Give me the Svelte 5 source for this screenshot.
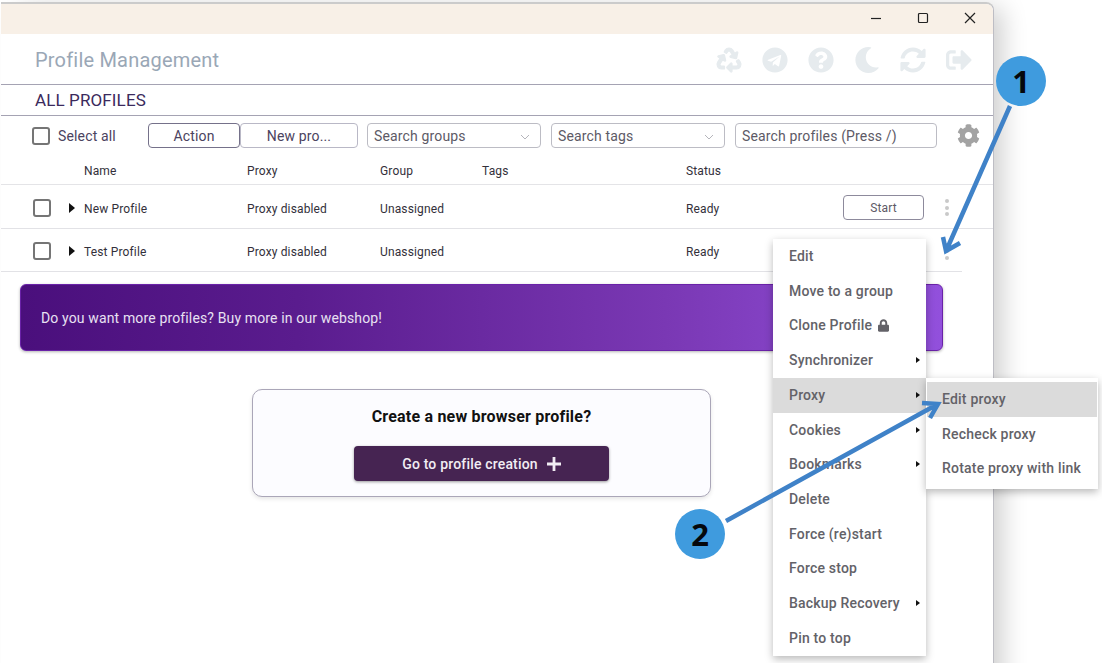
<script>
  const headerIcons = [
    { box: '0 0 512 512', heavy: true, d: 'M184.561 261.903c3.232 13.997-12.123 24.635-24.068 17.168l-40.736-25.455-50.867 81.402C55.606 356.273 70.96 384 96.012 384H148c6.627 0 12 5.373 12 12v40c0 6.627-5.373 12-12 12H96.115c-75.334 0-121.302-83.048-81.408-146.88l50.822-81.388-40.725-25.448c-12.081-7.547-8.966-25.961 4.879-29.158l110.237-25.45c8.611-1.988 17.201 3.381 19.189 11.99l25.452 110.237zm98.561-182.915l41.289 66.076-40.74 25.457c-12.051 7.528-9 25.953 4.879 29.158l110.237 25.45c8.672 1.999 17.215-3.438 19.189-11.99l25.45-110.237c3.197-13.844-11.99-24.719-24.068-17.168l-40.687 25.424-41.263-66.082c-37.521-60.033-125.209-60.171-162.816 0l-17.963 28.766c-3.51 5.62-1.8 13.021 3.82 16.533l33.919 21.195c5.62 3.512 13.024 1.803 16.536-3.817l17.961-28.743c12.712-20.341 41.973-19.676 54.257-.022zM497.288 301.12l-27.515-44.065c-3.511-5.623-10.916-7.334-16.538-3.821l-33.861 21.159c-5.62 3.512-7.33 10.915-3.818 16.536l27.564 44.112c13.257 21.211-2.057 48.96-27.136 48.96H320V336.02c0-14.213-17.242-21.383-27.313-11.313l-80 79.981c-6.249 6.248-6.249 16.379 0 22.627l80 79.989C302.689 517.308 320 510.3 320 495.989V448h95.88c75.274 0 121.335-82.997 81.408-146.88z' },
    { box: '0 0 496 512', d: 'M248 8C111 8 0 119 0 256s111 248 248 248 248-111 248-248S385 8 248 8zm121.8 169.9l-40.7 191.8c-3 13.6-11.1 16.9-22.4 10.5l-62-45.7-29.9 28.8c-3.3 3.3-6.1 6.1-12.5 6.1l4.4-63.1 114.9-103.8c5-4.4-1.1-6.9-7.7-2.5l-142 89.4-61.2-19.1c-13.3-4.2-13.6-13.3 2.8-19.7l239.1-92.2c11.1-4 20.8 2.7 17.2 19.5z' },
    { box: '0 0 512 512', d: 'M504 256c0 136.997-111.043 248-248 248S8 392.997 8 256C8 119.083 119.043 8 256 8s248 111.083 248 248zM262.655 90c-54.497 0-89.255 22.957-116.549 63.758-3.536 5.286-2.353 12.415 2.715 16.258l34.699 26.31c5.205 3.947 12.621 3.008 16.665-2.122 17.864-22.658 30.113-35.797 57.303-35.797 20.429 0 45.698 13.148 45.698 32.958 0 14.976-12.363 22.667-32.534 33.976C247.128 238.528 216 254.941 216 296v4c0 6.627 5.373 12 12 12h56c6.627 0 12-5.373 12-12v-1.333c0-28.462 83.186-29.647 83.186-106.667 0-58.002-60.165-102-116.531-102zM256 338c-25.365 0-46 20.635-46 46 0 25.364 20.635 46 46 46s46-20.636 46-46c0-25.365-20.635-46-46-46z' },
    { box: '0 0 512 512', d: 'M283.211 512c78.962 0 151.079-35.925 198.857-94.792 7.068-8.708-.639-21.43-11.562-19.35-124.203 23.654-238.262-71.576-238.262-196.954 0-72.222 38.662-138.635 101.498-174.394 9.686-5.512 7.25-20.197-3.756-22.23A258.156 258.156 0 0 0 283.211 0c-141.309 0-256 114.511-256 256 0 141.309 114.511 256 256 256z' },
    { box: '0 0 512 512', d: 'M370.72 133.28C339.458 104.008 298.888 87.962 255.848 88c-77.458.068-144.328 53.178-162.791 126.85-1.344 5.363-6.122 9.15-11.651 9.15H24.103c-7.498 0-13.194-6.807-11.807-14.176C33.933 94.924 134.813 8 256 8c66.448 0 126.791 26.136 171.315 68.685L463.03 40.97C478.149 25.851 504 36.559 504 57.941V192c0 13.255-10.745 24-24 24H345.941c-21.382 0-32.09-25.851-16.971-40.971l41.75-41.749zM32 296h134.059c21.382 0 32.09 25.851 16.971 40.971l-41.75 41.75c31.262 29.273 71.835 45.319 114.876 45.28 77.418-.07 144.315-53.144 162.787-126.849 1.344-5.363 6.122-9.15 11.651-9.15h57.304c7.498 0 13.194 6.807 11.807 14.176C478.067 417.076 377.187 504 256 504c-66.448 0-126.791-26.136-171.315-68.685L48.97 471.03C33.851 486.149 8 475.441 8 454.059V320c0-13.255 10.745-24 24-24z' },
    { box: '0 0 512 512', d: 'M497 273L329 441c-15 15-41 4.5-41-17v-96H152c-13.3 0-24-10.7-24-24v-96c0-13.3 10.7-24 24-24h136V88c0-21.4 25.9-32 41-17l168 168c9.3 9.4 9.3 24.6 0 34zM192 436v-40c0-6.6-5.4-12-12-12H96c-17.7 0-32-14.3-32-32V160c0-17.7 14.3-32 32-32h84c6.6 0 12-5.4 12-12V76c0-6.6-5.4-12-12-12H96c-53 0-96 43-96 96v192c0 53 43 96 96 96h84c6.6 0 12-5.4 12-12z' }
  ];
  const cog = 'M487.4 315.7l-42.6-24.6c4.3-23.2 4.3-47 0-70.2l42.6-24.6c4.9-2.8 7.1-8.6 5.5-14-11.1-35.6-30-67.8-54.7-94.6-3.8-4.1-10-5.1-14.8-2.3L380.8 110c-17.9-15.4-38.5-27.3-60.8-35.1V25.8c0-5.6-3.9-10.5-9.4-11.7-36.7-8.2-74.3-7.8-109.2 0-5.5 1.2-9.4 6.1-9.4 11.7V75c-22.2 7.9-42.8 19.8-60.8 35.1L88.7 85.5c-4.9-2.8-11-1.9-14.8 2.3-24.7 26.7-43.6 58.9-54.7 94.6-1.7 5.4.6 11.2 5.5 14L67.3 221c-4.3 23.2-4.3 47 0 70.2l-42.6 24.6c-4.9 2.8-7.1 8.6-5.5 14 11.1 35.6 30 67.8 54.7 94.6 3.8 4.1 10 5.1 14.8 2.3l42.6-24.6c17.9 15.4 38.5 27.3 60.8 35.1v49.2c0 5.6 3.9 10.5 9.4 11.7 36.7 8.2 74.3 7.8 109.2 0 5.5-1.2 9.4-6.1 9.4-11.7v-49.2c22.2-7.9 42.8-19.8 60.8-35.1l42.6 24.6c4.9 2.8 11 1.9 14.8-2.3 24.7-26.7 43.6-58.9 54.7-94.6 1.5-5.5-.7-11.3-5.6-14.1zM256 336c-44.1 0-80-35.9-80-80s35.9-80 80-80 80 35.9 80 80-35.9 80-80 80z';
  const lock = 'M400 224h-24v-72C376 68.2 307.8 0 224 0S72 68.2 72 152v72H48c-26.5 0-48 21.5-48 48v192c0 26.5 21.5 48 48 48h352c26.5 0 48-21.5 48-48V272c0-26.5-21.5-48-48-48zm-104 0H152v-72c0-39.7 32.3-72 72-72s72 32.3 72 72v72z';

  const profiles = [
    { name: 'New Profile', cls: 'row' },
    { name: 'Test Profile', cls: 'row short' }
  ];
  const menu = [
    { label: 'Edit' },
    { label: 'Move to a group' },
    { label: 'Clone Profile', locked: true },
    { label: 'Synchronizer', sub: true },
    { label: 'Proxy', sub: true, active: true },
    { label: 'Cookies', sub: true },
    { label: 'Bookmarks', sub: true },
    { label: 'Delete' },
    { label: 'Force (re)start' },
    { label: 'Force stop' },
    { label: 'Backup Recovery', sub: true },
    { label: 'Pin to top' }
  ];
  const submenu = [
    { label: 'Edit proxy', active: true },
    { label: 'Recheck proxy' },
    { label: 'Rotate proxy with link' }
  ];
</script>

<div class="page">
  <div class="window">
    <div class="titlebar">
      <svg class="winbtn" viewBox="0 0 12 12"><path d="M1 6.500h10" /></svg>
      <svg class="winbtn" viewBox="0 0 12 12"><rect x="1.500" y="1.500" width="9" height="9" rx="1" /></svg>
      <svg class="winbtn" viewBox="0 0 12 12"><path d="M1 1l10 10M11 1L1 11" /></svg>
    </div>

    <header class="head">
      <h1>Profile Management</h1>
      <div class="head-icons">
        {#each headerIcons as icon}
          <svg viewBox={icon.box} class:heavy={icon.heavy}><path d={icon.d} /></svg>
        {/each}
      </div>
    </header>

    <div class="section">ALL PROFILES</div>

    <div class="toolbar">
      <span class="check tool-check"></span>
      <span class="select-all">Select all</span>
      <button class="btn action">Action</button>
      <button class="btn newpro">New pro...</button>
      <div class="field groups">Search groups
        <svg viewBox="0 0 10 6"><path d="M1 1l4 4 4-4" /></svg>
      </div>
      <div class="field tags">Search tags
        <svg viewBox="0 0 10 6"><path d="M1 1l4 4 4-4" /></svg>
      </div>
      <div class="field profiles">Search profiles (Press /)</div>
      <svg class="gear" viewBox="0 0 512 512"><path d={cog} /></svg>
    </div>

    <div class="thead">
      <span></span><span>Name</span><span>Proxy</span><span>Group</span><span>Tags</span><span>Status</span>
    </div>

    {#each profiles as p}
      <div class={p.cls}>
        <div class="lead"><span class="check"></span><span class="caret"></span></div>
        <span>{p.name}</span>
        <span>Proxy disabled</span>
        <span>Unassigned</span>
        <span></span>
        <span>Ready</span>
        <button class="start">Start</button>
        <div class="dots"><i></i><i></i><i></i></div>
      </div>
    {/each}

    <div class="banner">Do you want more profiles? Buy more in our webshop!</div>

    <div class="card">
      <h2>Create a new browser profile?</h2>
      <button class="create">Go to profile creation
        <svg viewBox="0 0 14 14"><path d="M7 0v14M0 7h14" /></svg>
      </button>
    </div>
  </div>

  <div class="menu">
    {#each menu as item}
      <div class="item" class:active={item.active}>
        {item.label}
        {#if item.locked}
          <svg class="lock" viewBox="0 0 448 512"><path d={lock} /></svg>
        {/if}
        {#if item.sub}<span class="subcaret"></span>{/if}
      </div>
    {/each}
  </div>

  <div class="menu sub">
    {#each submenu as item}
      <div class="item" class:active={item.active}>{item.label}</div>
    {/each}
  </div>

  <svg class="arrows" viewBox="0 0 1102 663">
    <path d="M1010 106L946.500 250M943 237L946 251L960 243" />
    <path d="M726 521L937 404.500M922 403L938 404L930 418" />
  </svg>
  <div class="badge one">1</div>
  <div class="badge two">2</div>
</div>

<style>
  :global(html), :global(body) {
    margin: 0;
    overflow: hidden;
    background: #fff;
  }
  .page {
    position: relative;
    height: 663px;
    overflow: hidden;
    padding-top: 2px;
    box-sizing: border-box;
    font-family: Roboto, "Liberation Sans", sans-serif;
    color: #3a3446;
  }
  .window {
    margin-left: 1px;
    width: 993px;
    height: 700px;
    box-sizing: border-box;
    background: #fff;
    border-top: 2px solid #cbcbcb;
    border-right: 1px solid #bdbdc4;
    border-top-right-radius: 8px;
    box-shadow: 14px 0 26px -6px rgba(0, 0, 0, .2);
  }
  .titlebar {
    height: 30px;
    box-sizing: border-box;
    padding: 0 17px 2px 0;
    background: #f8f0e7;
    border-top-right-radius: 7px;
    display: flex;
    align-items: center;
    justify-content: flex-end;
    gap: 35px;
  }
  .winbtn {
    width: 12px;
    height: 12px;
    fill: none;
    stroke: #222;
    stroke-width: 1.200;
  }
  .head {
    height: 50px;
    box-sizing: content-box;
    border-bottom: 1px solid #a5a3b3;
    display: flex;
    align-items: center;
    justify-content: space-between;
    padding: 0 21px 0 34px;
  }
  h1 {
    margin: 2px 0 0;
    font-size: 20px;
    font-weight: 400;
    color: #9aa7b6;
    letter-spacing: .2px;
  }
  .head-icons {
    display: flex;
    gap: 20px;
    padding-top: 2px;
  }
  .head-icons svg {
    width: 26px;
    height: 26px;
    fill: #e6ebee;
  }
  .head-icons svg.heavy {
    stroke: #e6ebee;
    stroke-width: 26;
    overflow: visible;
    width: 24px;
    margin: 0 1px;
  }
  .section {
    height: 30px;
    border-bottom: 1px solid #a5a3b3;
    padding-left: 34px;
    line-height: 31px;
    font-size: 17px;
    letter-spacing: .12px;
    color: #3b2a5c;
  }
  .toolbar {
    height: 39px;
    display: flex;
    align-items: flex-start;
    padding: 7px 0 0 31px;
    box-sizing: border-box;
    font-size: 14px;
    letter-spacing: .15px;
  }
  .check {
    display: block;
    width: 18px;
    height: 18px;
    box-sizing: border-box;
    border: 2px solid #757575;
    border-radius: 3px;
    flex: none;
  }
  .tool-check {
    margin: 4px 8px 0 0;
  }
  .select-all {
    width: 90px;
    line-height: 27px;
    color: #4b4360;
  }
  button {
    font-family: inherit;
    cursor: pointer;
    letter-spacing: inherit;
  }
  .btn {
    height: 25px;
    padding: 0;
    font-size: 14px;
    color: #4b4360;
    background: #fff;
    border: 1px solid #b9b8c6;
    border-radius: 4px;
  }
  .action {
    width: 92px;
    border-color: #75718a;
  }
  .newpro {
    width: 118px;
  }
  .field {
    height: 25px;
    box-sizing: border-box;
    border: 1px solid #bcbcc4;
    border-radius: 4px;
    padding: 0 6px;
    line-height: 25px;
    color: #5d5a66;
    position: relative;
    margin-left: 10px;
  }
  .field svg {
    position: absolute;
    right: 10px;
    top: 10px;
    width: 10px;
    height: 6px;
    fill: none;
    stroke: #b5b5bb;
    stroke-width: 1;
  }
  .groups {
    width: 174px;
    margin-left: 9px;
  }
  .tags {
    width: 174px;
  }
  .profiles {
    width: 202px;
  }
  .gear {
    width: 23px;
    height: 23px;
    margin: 1px 0 0 20px;
    fill: #a3a3a3;
  }
  .thead, .row {
    display: grid;
    grid-template-columns: 83px 163px 133px 102px 204px 157px 81px 1fr;
    align-items: center;
    font-size: 12px;
    letter-spacing: .14px;
    color: #33303a;
  }
  .thead {
    height: 27px;
    padding-top: 2px;
    border-bottom: 1px solid #e4e4e7;
  }
  .row {
    height: 41px;
    padding-top: 2px;
    border-bottom: 1px solid #e2e2e6;
  }
  .row > span {
    padding-top: 2px;
  }
  .row.short {
    height: 40px;
    margin-right: 31px;
  }
  .lead {
    display: flex;
    align-items: center;
    padding-left: 32px;
    gap: 18px;
  }
  .caret {
    width: 0;
    height: 0;
    border-left: 6px solid #111;
    border-top: 5px solid transparent;
    border-bottom: 5px solid transparent;
  }
  .start {
    width: 81px;
    height: 25px;
    padding: 0;
    font-size: 12px;
    color: #5d5a66;
    background: #fff;
    border: 1px solid #8d8a9c;
    border-radius: 4px;
  }
  .dots {
    display: flex;
    flex-direction: column;
    align-items: center;
    gap: 2.500px;
    width: 46px;
  }
  .dots i {
    display: block;
    width: 4px;
    height: 4px;
    border-radius: 50%;
    background: #c9c9c9;
  }
  .banner {
    margin: 12px 50px 0 19px;
    height: 67px;
    box-sizing: border-box;
    padding-left: 20px;
    line-height: 66px;
    font-size: 14px;
    letter-spacing: .14px;
    color: #e8e1f2;
    border: 1px solid #6a22a8;
    border-radius: 6px;
    background: linear-gradient(90deg, #4a0f7c 0%, #5a1c8e 30%, #7a38b4 70%, #9250dc 100%);
    box-shadow: 0 1px 3px rgba(0, 0, 0, .3);
  }
  .card {
    margin: 38px 0 0 251px;
    width: 459px;
    height: 108px;
    box-sizing: border-box;
    background: #fcfcff;
    border: 1px solid #aaa6b8;
    border-radius: 10px;
    box-shadow: 0 2px 4px rgba(0, 0, 0, .1);
    display: flex;
    flex-direction: column;
    align-items: center;
  }
  h2 {
    margin: 17px 0 0;
    font-size: 16px;
    line-height: 20px;
    font-weight: 700;
    letter-spacing: .2px;
    color: #111;
  }
  .create {
    margin-top: 19px;
    width: 255px;
    height: 35px;
    border: none;
    border-radius: 4px;
    background: #462452;
    color: #f1edf3;
    font-size: 14px;
    font-weight: 500;
    letter-spacing: .18px;
    display: flex;
    align-items: center;
    justify-content: center;
    gap: 9px;
    box-shadow: 0 1px 3px rgba(0, 0, 0, .4);
  }
  .create svg {
    width: 14px;
    height: 14px;
    fill: none;
    stroke: #f1edf3;
    stroke-width: 2.800;
  }
  .menu {
    position: absolute;
    left: 773px;
    top: 239px;
    width: 153px;
    background: #fff;
    box-shadow: 0 3px 8px rgba(0, 0, 0, .28);
    font-size: 14px;
    font-weight: 500;
    letter-spacing: .2px;
    color: #636268;
  }
  .menu.sub {
    left: 926px;
    top: 378px;
    width: 172px;
    padding: 4px 1px 3px;
    box-sizing: border-box;
  }
  .item {
    height: 34.730px;
    line-height: 35px;
    padding-left: 16px;
    position: relative;
    white-space: nowrap;
  }
  .sub .item {
    padding-left: 15px;
  }
  .item.active {
    background: #dbdbdb;
  }
  .lock {
    width: 11px;
    height: 13px;
    margin-left: 2px;
    fill: #636268;
    vertical-align: -2px;
  }
  .subcaret {
    position: absolute;
    left: 143px;
    top: 14px;
    width: 0;
    height: 0;
    border-left: 4px solid #111;
    border-top: 3.500px solid transparent;
    border-bottom: 3.500px solid transparent;
  }
  .arrows {
    position: absolute;
    inset: 0;
    width: 1102px;
    height: 663px;
    pointer-events: none;
    fill: none;
    stroke: #3f82c8;
    stroke-width: 4.500;
  }
  .badge {
    position: absolute;
    width: 50px;
    height: 50px;
    border-radius: 50%;
    background: #3f9bde;
    color: #05080c;
    font-family: "Open Sans", "Liberation Sans", sans-serif;
    font-weight: 700;
    font-size: 31px;
    line-height: 50px;
    text-align: center;
  }
  .one {
    left: 996px;
    top: 56px;
  }
  .two {
    left: 675px;
    top: 509px;
  }
</style>
